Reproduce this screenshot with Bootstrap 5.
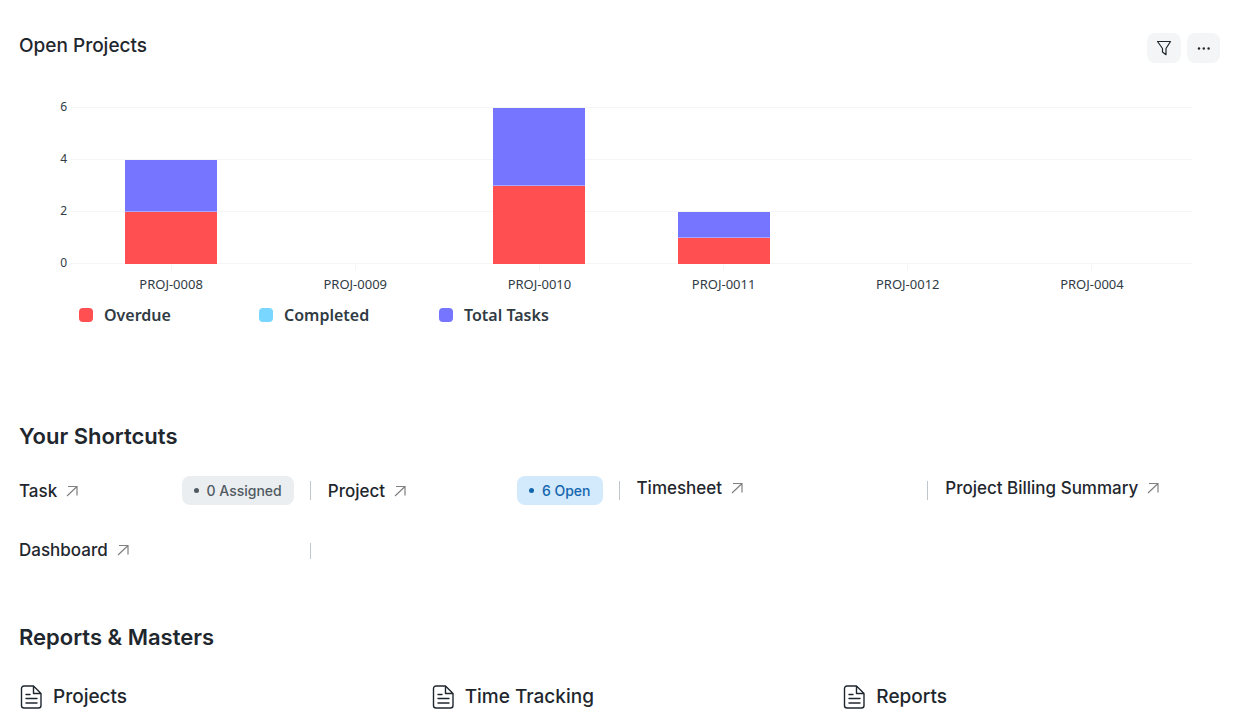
<!DOCTYPE html>
<html lang="en">
<head>
<meta charset="utf-8">
<meta name="viewport" content="width=device-width, initial-scale=1">
<title>Projects</title>
<link href="https://cdn.jsdelivr.net/npm/bootstrap@5.3.0/dist/css/bootstrap.min.css" rel="stylesheet">
<style>
  body { font-family: Inter, "Liberation Sans", sans-serif; color: #1f272e; background: #fff; }
  .workspace { padding: 32px 17px 0 19px; }
  h2, h3 { margin: 0; color: #1f272e; }
  .chart-title { font-size: 19px; line-height: 28px; font-weight: 500; }
  .section-title { font-size: 22px; line-height: 28px; font-weight: 600; }
  .tools { gap: 6px; }
  .tool-btn { height: 30px; border: 0; border-radius: 8px; background: #f4f5f6; color: #1f272e; padding: 0; margin-top: 1px; }
  .tool-btn.filter { width: 34px; }
  .tool-btn.more { width: 33px; }

  .chart { font-family: "Noto Sans", "Open Sans", sans-serif; color: #313b44; margin-top: 36px; padding: 0 28px 0 32px; }
  .axis-y { width: 20px; height: 165px; font-size: 12px; line-height: 16px; padding-right: 4px; }
  .axis-y span { height: 52px; display: block; text-align: right; }
  .plot { display: grid; grid-template-rows: 157px; margin-top: 8px; }
  .plot > div { grid-area: 1 / 1; }
  .lines > div { height: 52px; border-top: 1px solid #f4f5f6; }
  .lines > div:last-child { height: 1px; }
  .bars { padding: 0 8px; }
  .bar-seg.late { background: #ff4f50; }
  .bar-seg.total { background: #7575ff; border-bottom: 1px solid #a9a6ff; }
  .axis-x { font-size: 13px; line-height: 16px; padding: 0 8px 0 28px; text-align: center; }
  .axis-x span::before { content: ""; display: block; width: 1px; height: 6px; margin: 0 auto 6px; background: #f4f5f6; }
  .legend-row { font-size: 16px; line-height: 22px; font-weight: 600; padding-left: 28px; margin-top: 12px; }
  .legend-item { width: 180px; }
  .swatch { width: 14px; height: 14px; border-radius: 4px; margin-right: 11px; }
  .swatch.late { background: #ff4f50; }
  .swatch.done { background: #78d6ff; }
  .swatch.total { background: #7575ff; }

  .shortcuts-section { margin-top: 96px; }
  .masters-section { margin-top: 59px; }
  .shortcuts { display: grid; grid-template-columns: repeat(4, minmax(0, 1fr)); column-gap: 34px; row-gap: 33px; margin-top: 26px; }
  .shortcut { position: relative; min-height: 26px; }
  .shortcut:not(:nth-child(4n))::after { content: ""; position: absolute; top: 5px; bottom: 5px; right: -17px; width: 1px; background: #c0c6cc; }
  .shortcut a { display: flex; align-items: center; font-size: 17px; line-height: 24px; font-weight: 500; color: #1f272e; text-decoration: none; white-space: nowrap; }
  .shortcut a svg { color: #808080; margin-left: 9px; }
  .pill { height: 29px; border-radius: 8px; padding: 0 12px; font-size: 14px; font-weight: 500; white-space: nowrap; }
  .pill::before { content: ""; width: 5px; height: 5px; border-radius: 50%; background: currentColor; margin-right: 8px; }
  .pill.grey { background: #ebeef0; color: #505a62; }
  .pill.blue { background: #d3e9fc; color: #1366ae; }

  .masters { display: grid; grid-template-columns: repeat(3, minmax(0, 1fr)); column-gap: 34px; margin-top: 32px; }
  .masters h3 { font-size: 19px; line-height: 28px; font-weight: 500; }
  .masters svg { margin-right: 10px; }
</style>
</head>
<body>
<svg width="0" height="0" class="position-absolute" aria-hidden="true">
  <symbol id="arrow" viewBox="0 0 12 12"><path d="M1 11 11 1.500M2 1.500h9v9" fill="none" stroke="currentColor" stroke-width="1.200"/></symbol>
  <symbol id="file" viewBox="0 0 24 24"><path d="M14.500 1H5a2.500 2.500 0 0 0-2.500 2.500v17A2.500 2.500 0 0 0 5 23h14.500a2.500 2.500 0 0 0 2.500-2.500V8.500zM14.500 1v7.500H22M7 9.500h4M7 13.500h11M7 18h11" fill="none" stroke="currentColor" stroke-width="1.400" stroke-linejoin="round" stroke-linecap="round"/></symbol>
</svg>
<main class="workspace">
  <section>
    <div class="d-flex justify-content-between align-items-start">
      <h3 class="chart-title">Open Projects</h3>
      <div class="tools d-flex">
        <button type="button" class="tool-btn filter d-flex align-items-center justify-content-center" aria-label="Filter">
          <svg width="16" height="16" viewBox="0 0 16 16" fill="none" stroke="currentColor" stroke-width="1.200" stroke-linejoin="round"><path d="M1.500 1.500h13L10 8.500v6.200L6.500 12V8.500z"/></svg>
        </button>
        <button type="button" class="tool-btn more d-flex align-items-center justify-content-center" aria-label="More">
          <svg width="14" height="4" viewBox="0 0 14 4" fill="currentColor"><circle cx="2" cy="2.500" r="1.200"/><circle cx="6.800" cy="2.500" r="1.200"/><circle cx="11.600" cy="2.500" r="1.200"/></svg>
        </button>
      </div>
    </div>
    <div class="chart">
      <div class="d-flex">
        <div class="axis-y"><span>6</span><span>4</span><span>2</span><span>0</span></div>
        <div class="plot flex-grow-1">
          <div class="lines"><div></div><div></div><div></div><div></div></div>
          <div class="bars d-flex align-items-end">
            <div class="col d-flex flex-column align-items-center"><div class="bar-seg total w-50" style="height:52px"></div><div class="bar-seg late w-50" style="height:52px"></div></div>
            <div class="col"></div>
            <div class="col d-flex flex-column align-items-center"><div class="bar-seg total w-50" style="height:78px"></div><div class="bar-seg late w-50" style="height:78px"></div></div>
            <div class="col d-flex flex-column align-items-center"><div class="bar-seg total w-50" style="height:26px"></div><div class="bar-seg late w-50" style="height:26px"></div></div>
            <div class="col"></div>
            <div class="col"></div>
          </div>
        </div>
      </div>
      <div class="axis-x d-flex"><span class="col">PROJ-0008</span><span class="col">PROJ-0009</span><span class="col">PROJ-0010</span><span class="col">PROJ-0011</span><span class="col">PROJ-0012</span><span class="col">PROJ-0004</span></div>
      <div class="legend-row d-flex">
        <div class="legend-item d-flex align-items-center"><span class="swatch late"></span>Overdue</div>
        <div class="legend-item d-flex align-items-center"><span class="swatch done"></span>Completed</div>
        <div class="legend-item d-flex align-items-center"><span class="swatch total"></span>Total Tasks</div>
      </div>
    </div>
  </section>

  <section class="shortcuts-section">
    <h2 class="section-title">Your Shortcuts</h2>
    <div class="shortcuts">
      <div class="shortcut d-flex justify-content-between align-items-center"><a href="#task">Task<svg width="12" height="12"><use href="#arrow"/></svg></a><span class="pill grey d-inline-flex align-items-center">0 Assigned</span></div>
      <div class="shortcut d-flex justify-content-between align-items-center"><a href="#project">Project<svg width="12" height="12"><use href="#arrow"/></svg></a><span class="pill blue d-inline-flex align-items-center">6 Open</span></div>
      <div class="shortcut d-flex align-items-start"><a href="#timesheet">Timesheet<svg width="12" height="12"><use href="#arrow"/></svg></a></div>
      <div class="shortcut d-flex align-items-start"><a href="#billing">Project Billing Summary<svg width="12" height="12"><use href="#arrow"/></svg></a></div>
      <div class="shortcut d-flex align-items-start"><a href="#dashboard">Dashboard<svg width="12" height="12"><use href="#arrow"/></svg></a></div>
    </div>
  </section>

  <section class="masters-section">
    <h2 class="section-title">Reports &amp; Masters</h2>
    <div class="masters">
      <div class="d-flex align-items-center"><svg width="24" height="24"><use href="#file"/></svg><h3>Projects</h3></div>
      <div class="d-flex align-items-center"><svg width="24" height="24"><use href="#file"/></svg><h3>Time Tracking</h3></div>
      <div class="d-flex align-items-center"><svg width="24" height="24"><use href="#file"/></svg><h3>Reports</h3></div>
    </div>
  </section>
</main>
<script src="https://cdn.jsdelivr.net/npm/bootstrap@5.3.0/dist/js/bootstrap.bundle.min.js"></script>
</body>
</html>
